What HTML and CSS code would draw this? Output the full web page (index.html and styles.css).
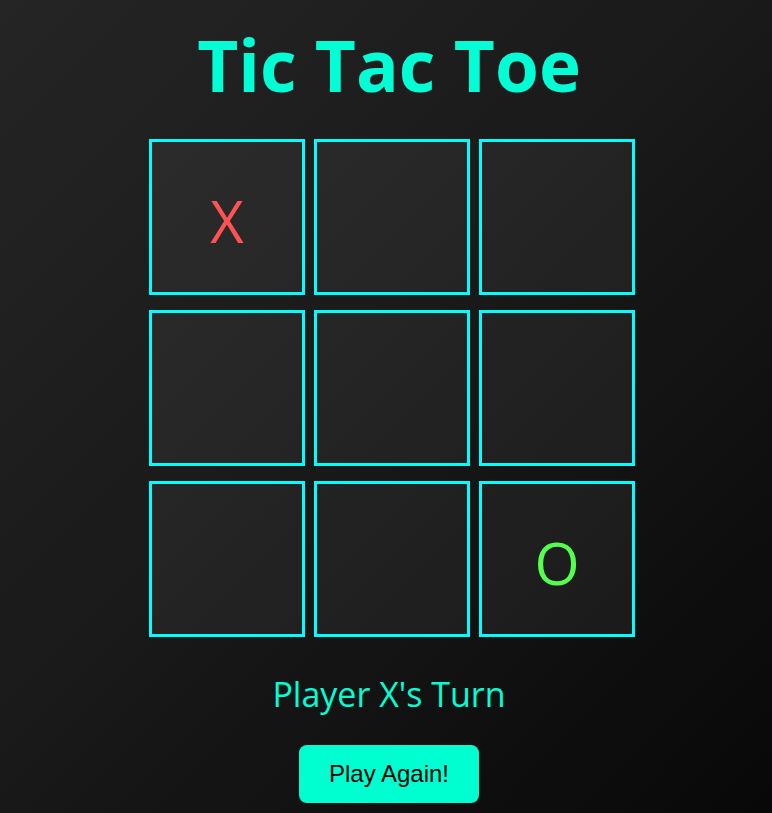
FILE: index.html
```html
<!DOCTYPE html>
<html lang="en">
<head>
<meta charset="utf-8">
<title>Tic Tac Toe</title>
<link rel="stylesheet" href="styles.css">
</head>
<body>
<main class="game">
  <h1 class="title">Tic Tac Toe</h1>
  <div class="board">
    <div class="cell x">X</div>
    <div class="cell"></div>
    <div class="cell"></div>
    <div class="cell"></div>
    <div class="cell"></div>
    <div class="cell"></div>
    <div class="cell"></div>
    <div class="cell"></div>
    <div class="cell o">O</div>
  </div>
  <p class="status">Player X's Turn</p>
  <button class="reset" type="button">Play Again!</button>
</main>
</body>
</html>
```
FILE: styles.css
```css
html, body {
  margin: 0;
  padding: 0;
}
body {
  min-height: 100vh;
  background: linear-gradient(135deg, #252525 0%, #1a1a1a 45%, #080808 100%);
  font-family: "Open Sans", "Noto Sans", sans-serif;
  color: #00ffd5;
}
.game {
  display: flex;
  flex-direction: column;
  align-items: center;
  padding-left: 6px;
  padding-top: 1px;
}
.title {
  margin: 21px 0 0;
  font-size: 71px;
  font-weight: 700;
  line-height: 1.2;
  color: #00ffd5;
}
.board {
  margin: 32px 0 0 6px;
  display: grid;
  grid-template-columns: repeat(3, 156px);
  grid-auto-rows: 156px;
  column-gap: 9px;
  row-gap: 15px;
}
.cell {
  box-sizing: border-box;
  border: 3px solid #00ffff;
  background: rgba(255, 255, 255, 0.05);
  display: flex;
  align-items: center;
  justify-content: center;
  font-size: 58px;
  padding-top: 6px;
}
.cell.x { color: #ff5252; }
.cell.o { color: #55ff4f; }
.status {
  margin: 37px 0 0;
  font-size: 34px;
  line-height: 1.2;
  color: #00ffd5;
}
.reset {
  margin-top: 30px;
  font-family: "Liberation Sans", Arial, sans-serif;
  font-size: 24px;
  line-height: 28px;
  padding: 15px 30px;
  border: none;
  border-radius: 8px;
  background: #00ffd0;
  color: #000;
}
```
